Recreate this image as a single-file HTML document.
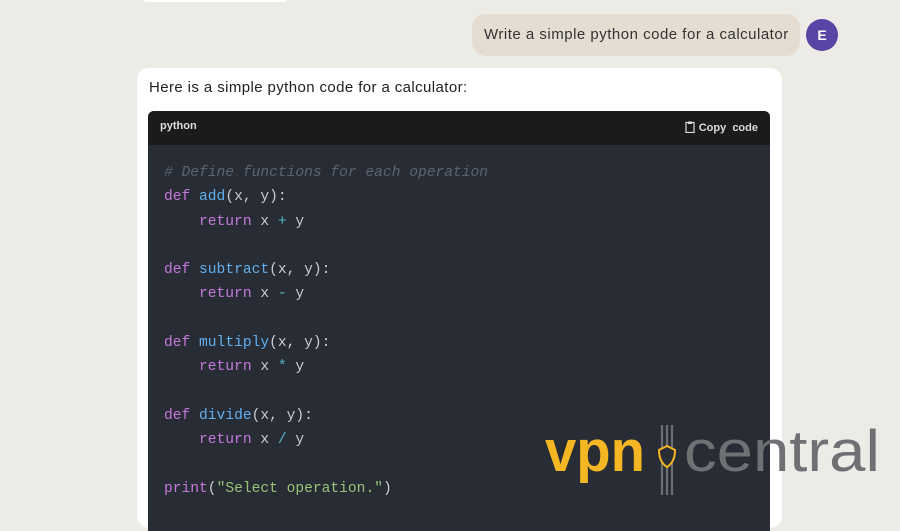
<!DOCTYPE html>
<html><head><style>
body{margin:0;width:900px;height:500px;overflow:hidden;background:#edebe5;font-family:"Liberation Sans",sans-serif;position:relative}
.top2{position:absolute;left:140px;top:-14px;width:150px;height:16px;background:#fff;border-radius:8px}
.bub{position:absolute;left:472px;top:14px;width:328px;height:42px;background:#e5ddd1;border-radius:14px;font-size:15px;color:#333;line-height:42px;text-indent:12px;letter-spacing:0.5px}
.av{position:absolute;left:806px;top:19px;width:32px;height:32px;border-radius:50%;background:#5a45a6;color:#fff;font-weight:bold;font-size:14px;text-align:center;line-height:32px}
.card{position:absolute;left:137px;top:68px;width:645px;height:460px;background:#fff;border-radius:12px}
.intro{position:absolute;left:149px;top:79px;font-size:15px;color:#222;letter-spacing:0.4px}
.cb{position:absolute;left:148px;top:111px;width:622px;height:420px;background:#282c34;border-radius:6px 6px 0 0;overflow:hidden}
.hd{height:34px;background:#1b1b1b;color:#ddd;font-size:11px;font-weight:bold;position:relative}
.hd .l{position:absolute;left:12px;top:9px}
.hd .r{position:absolute;right:12px;top:10px}
pre{margin:0;position:absolute;left:16px;top:50px;font-family:"Liberation Mono",monospace;font-size:14.6px;line-height:24.3px;color:#c8ccd4}
.c{color:#5c6370;font-style:italic}.k{color:#c678dd}.f{color:#61afef}.o{color:#56b6c2}.s{color:#98c379}
</style></head><body>
<div class="top2"></div>
<div class="bub">Write a simple python code for a calculator</div>
<div class="av">E</div>
<div class="card"></div>
<div class="intro">Here is a simple python code for a calculator:</div>
<div class="cb">
<div class="hd"><span class="l">python</span><span class="r"><svg width="10" height="12" viewBox="0 0 10 12" style="vertical-align:-2px;margin-right:4px"><rect x="1" y="1.5" width="8" height="10" fill="none" stroke="#ddd" stroke-width="1.2"/><rect x="3" y="0.5" width="4" height="2.5" fill="#ddd"/></svg>Copy &nbsp;code</span></div>
<pre><span class="c"># Define functions for each operation</span>
<span class="k">def</span> <span class="f">add</span>(x, y):
    <span class="k">return</span> x <span class="o">+</span> y

<span class="k">def</span> <span class="f">subtract</span>(x, y):
    <span class="k">return</span> x <span class="o">-</span> y

<span class="k">def</span> <span class="f">multiply</span>(x, y):
    <span class="k">return</span> x <span class="o">*</span> y

<span class="k">def</span> <span class="f">divide</span>(x, y):
    <span class="k">return</span> x <span class="o">/</span> y

<span class="k">print</span>(<span class="s">"Select operation."</span>)</pre>
</div>
<svg width="360" height="85" viewBox="540 415 360 85" style="position:absolute;left:540px;top:415px">
<text x="545" y="471" font-family="Liberation Sans,sans-serif" font-weight="bold" font-size="58" fill="#f4b622" textLength="100" lengthAdjust="spacingAndGlyphs">vpn</text>
<g stroke="#6b6e74" stroke-width="2.2"><line x1="662" y1="425" x2="662" y2="495"/><line x1="667" y1="425" x2="667" y2="495"/><line x1="672" y1="425" x2="672" y2="495"/></g>
<path d="M659 450 L667 446 L675 450 Q675 462 667 467 Q659 462 659 450Z" fill="#282c34" stroke="#f4b622" stroke-width="2"/>
<text x="684" y="471" font-family="Liberation Sans,sans-serif" font-size="58" fill="#6e7074" textLength="196" lengthAdjust="spacingAndGlyphs">central</text>
</svg>
</body></html>
